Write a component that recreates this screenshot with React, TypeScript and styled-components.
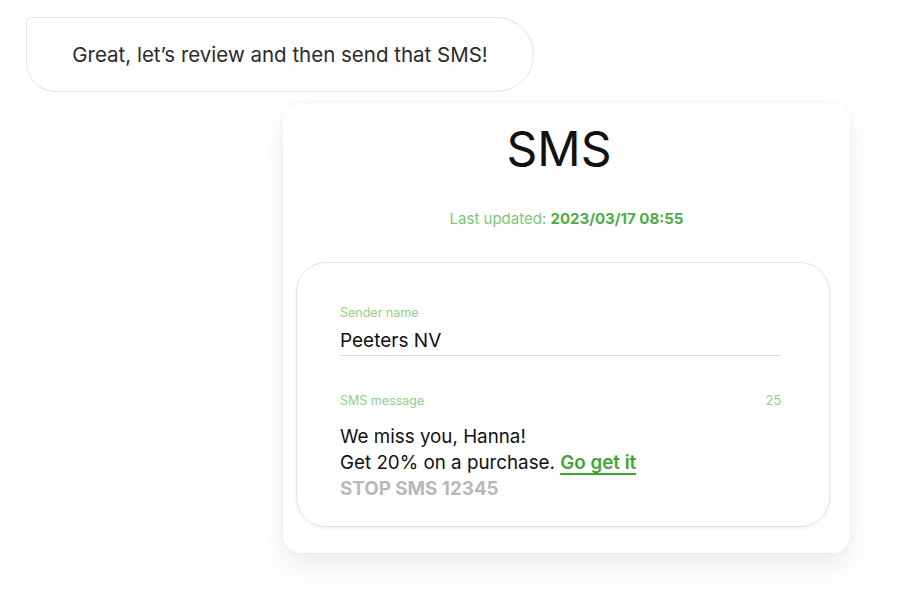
import React from "react";
import styled, { createGlobalStyle } from "styled-components";

const Global = createGlobalStyle`
  html, body { margin: 0; padding: 0; background: #ffffff; }
  body { font-family: Inter, "Noto Sans", sans-serif; color: #111; }
`;

const Page = styled.div`
  width: 900px;
  height: 600px;
  display: flex;
  flex-direction: column;
  align-items: flex-start;
  padding: 17px 0 0 26px;
  box-sizing: border-box;
`;

const Bubble = styled.div`
  width: 508px;
  height: 75px;
  box-sizing: border-box;
  border: 1.5px solid #dfe3ee;
  border-radius: 6px 38px 38px 30px;
  background: #fefeff;
  display: flex;
  align-items: center;
  justify-content: center;
  font-size: 20.5px;
  color: #2b2b2b;
`;

const Card = styled.div`
  margin: 11px 0 0 257px;
  width: 567px;
  height: 450px;
  box-sizing: border-box;
  border-radius: 18px;
  background: #ffffff;
  box-shadow: 0 14px 28px rgba(40, 50, 90, 0.09), 0 0 6px rgba(40, 50, 90, 0.04);
  display: flex;
  flex-direction: column;
  padding: 16px 20px 26px 13px;
`;

const Title = styled.h1`
  margin: 0;
  font-weight: 400;
  font-size: 48px;
  line-height: 60px;
  text-align: center;
  color: #111;
  padding-right: 8px;
`;

const Updated = styled.div`
  margin-top: 31px;
  text-align: center;
  font-size: 15px;
  line-height: 18px;
  color: #7cc77a;
  padding-left: 7px;
  b {
    font-weight: 700;
    color: #4cae48;
  }
`;

const Panel = styled.div`
  margin-top: 34px;
  flex: 1;
  box-sizing: border-box;
  border: 1.5px solid #e2e3e6;
  border-radius: 30px;
  box-shadow: 0 2px 4px rgba(0, 0, 0, 0.05);
  padding: 42px 48px 0 43px;
  display: flex;
  flex-direction: column;
`;

const LabelRow = styled.div`
  display: flex;
  justify-content: space-between;
  font-size: 12.5px;
  line-height: 15px;
  color: #8fd08b;
`;

const Field = styled.div`
  margin-top: 9px;
  font-size: 19px;
  line-height: 23px;
  padding-bottom: 3px;
  border-bottom: 1.5px solid #dcdde2;
  color: #111;
`;

const Message = styled.div`
  margin-top: 16px;
  font-size: 18.8px;
  line-height: 26px;
  color: #111;
`;

const LinkText = styled.span`
  color: #3fa535;
  font-weight: 600;
  text-decoration: underline;
  text-decoration-thickness: 2px;
  text-underline-offset: 4px;
`;

const Stop = styled.div`
  color: #b9b9bc;
  font-weight: 700;
`;

const Gap = styled.div<{ $h: number }>`
  height: ${(p) => p.$h}px;
`;

export default function App() {
  return (
    <>
      <Global />
      <Page>
        <Bubble>Great, let’s review and then send that SMS!</Bubble>
        <Card>
          <Title>SMS</Title>
          <Updated>
            Last updated: <b>2023/03/17 08:55</b>
          </Updated>
          <Panel>
            <LabelRow>
              <span>Sender name</span>
            </LabelRow>
            <Field>Peeters NV</Field>
            <Gap $h={37} />
            <LabelRow>
              <span>SMS message</span>
              <span>25</span>
            </LabelRow>
            <Message>
              <div>We miss you, Hanna!</div>
              <div>
                Get 20% on a purchase. <LinkText>Go get it</LinkText>
              </div>
              <Stop>STOP SMS 12345</Stop>
            </Message>
          </Panel>
        </Card>
      </Page>
    </>
  );
}
